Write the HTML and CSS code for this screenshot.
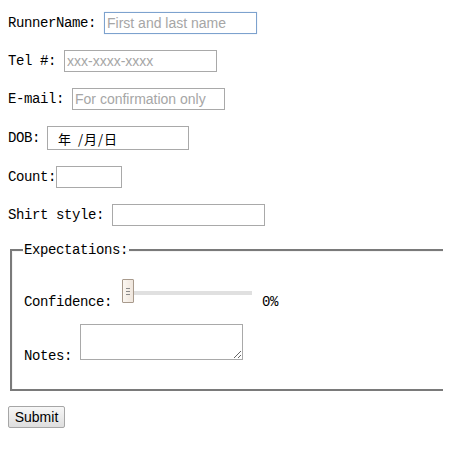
FILE: index.html
```html
<!DOCTYPE html>
<html lang="zh">
<head>
    <meta charset="UTF-8">
    <meta name="viewport" content="width=device-width, initial-scale=1.0">
    <title>Runner Sign-up</title>
    <link rel="stylesheet" href="styles.css">
</head>
<body>
    <form class="signup">
        <p class="row"><label for="runnerName">RunnerName:</label> <input id="runnerName" class="field focused" type="text" placeholder="First and last name"></p>
        <p class="row"><label for="tel">Tel #:</label> <input id="tel" class="field" type="text" placeholder="xxx-xxxx-xxxx"></p>
        <p class="row"><label for="email">E-mail:</label> <input id="email" class="field" type="text" placeholder="For confirmation only"></p>
        <p class="row row-date"><label for="dob">DOB:</label> <span id="dob" class="field field-date">年 /月/日</span></p>
        <p class="row"><label for="count">Count:</label><input id="count" class="field field-count" type="text"></p>
        <p class="row"><label for="shirt">Shirt style:</label> <input id="shirt" class="field" type="text"></p>

        <fieldset class="expectations">
            <legend>Expectations:</legend>
            <div class="fs-row fs-confidence">
                <label for="confidence">Confidence:</label>
                <input id="confidence" class="slider" type="range" min="0" max="100" value="0">
                <span class="slider-value">0%</span>
            </div>
            <div class="fs-row">
                <label for="notes">Notes:</label>
                <textarea id="notes" class="notes"></textarea>
            </div>
        </fieldset>

        <div class="actions">
            <button type="submit" class="submit-btn">Submit</button>
        </div>
    </form>
</body>
</html>
```

FILE: styles.css
```css
* {
    box-sizing: border-box;
}

body {
    margin: 8px;
    background: #ffffff;
    color: #000000;
    font-family: 'Liberation Mono', 'DejaVu Sans Mono', monospace;
    font-size: 14px;
    letter-spacing: -0.4px;
}

.signup {
    display: flex;
    flex-direction: column;
    gap: 16px;
    padding-top: 4px;
}

.row {
    margin: 0;
    height: 22px;
    display: flex;
    align-items: center;
}

.row-date {
    height: 24px;
}

.row label {
    margin-right: 8px;
}

.row label[for="count"] {
    margin-right: 0;
}

.row label[for="dob"] {
    margin-right: 7px;
}

.field {
    width: 153px;
    height: 22px;
    margin: 0;
    padding: 0 2px;
    border: 1px solid #a9a9a9;
    border-radius: 0;
    font-family: 'Liberation Sans', Arial, sans-serif;
    font-size: 14px;
    letter-spacing: 0;
    color: #000;
    background: #fff;
    outline: none;
}

.field::placeholder {
    color: #a6a6a6;
}

.focused {
    border-color: #7da2ce;
    box-shadow: 0 0 1px #c5d5ea;
}

.field-date {
    display: flex;
    align-items: center;
    width: 142px;
    height: 24px;
    padding-left: 10px;
    font-family: 'Noto Sans CJK SC', 'Liberation Sans', sans-serif;
    font-size: 13px;
    letter-spacing: 1px;
    word-spacing: 2px;
}

.field-count {
    width: 66px;
}

.expectations {
    margin: 0 -8px 0 2px;
    padding: 23px 12px 26px;
    border: 2px solid #7a7a7a;
    border-right: none;
    box-shadow: inset 1px 1px 0 #f4f4f4;
}

.expectations legend {
    padding: 0 1px;
    margin-left: -1px;
    line-height: 16px;
}

.fs-row {
    display: flex;
    align-items: flex-end;
}

.fs-row + .fs-row {
    margin-top: 15px;
}

.fs-row label {
    line-height: 14px;
    margin-right: 10px;
}

.fs-row label[for="notes"] {
    margin-right: 8px;
}

.slider {
    -webkit-appearance: none;
    appearance: none;
    width: 130px;
    height: 24px;
    margin: 0 10px 4px 0;
    padding: 0;
    background: transparent;
}

.slider::-webkit-slider-runnable-track {
    height: 4px;
    background: #e0e0e0;
}

.slider::-webkit-slider-thumb {
    -webkit-appearance: none;
    width: 12px;
    height: 24px;
    margin-top: -12px;
    border: 1px solid #a89a8c;
    border-radius: 1px;
    background:
        linear-gradient(#8a8a8a, #8a8a8a) 3px 8px / 4px 1px no-repeat,
        linear-gradient(#8a8a8a, #8a8a8a) 3px 11px / 4px 1px no-repeat,
        linear-gradient(#8a8a8a, #8a8a8a) 3px 14px / 4px 1px no-repeat,
        linear-gradient(90deg, #fbf7f2, #efe6dd);
}

.slider-value {
    line-height: 14px;
}

.notes {
    width: 163px;
    height: 36px;
    margin: 0 0 3px 0;
    border: 1px solid #a9a9a9;
    resize: both;
    font-family: 'Liberation Sans', Arial, sans-serif;
}

.actions {
    margin-top: -1px;
}

.submit-btn {
    width: 57px;
    height: 22px;
    padding: 0;
    border: 1px solid #a6a6a6;
    border-radius: 2px;
    background: linear-gradient(#f7f7f7, #dedede);
    font-family: 'Liberation Sans', Arial, sans-serif;
    font-size: 14px;
    color: #000;
}
```
